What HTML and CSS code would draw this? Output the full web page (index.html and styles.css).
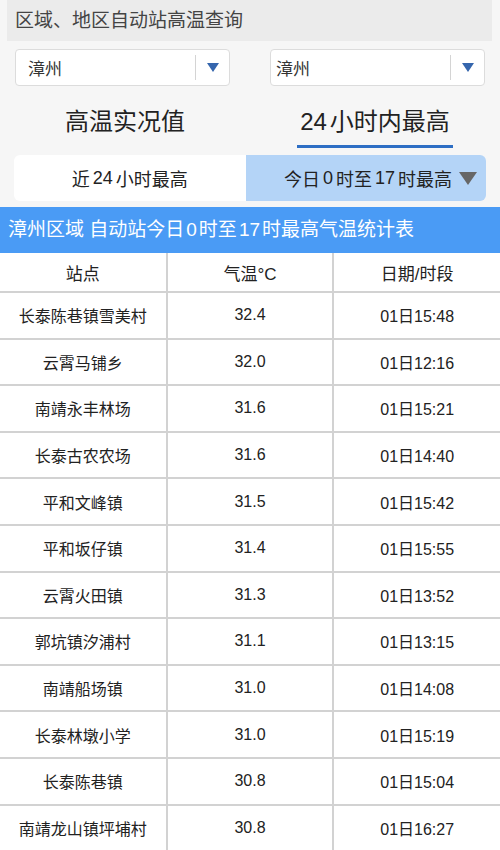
FILE: index.html
```html
<!DOCTYPE html>
<html lang="zh">
<head>
<meta charset="utf-8">
<link rel="stylesheet" href="styles.css">
</head>
<body>
<div class="page">
  <div class="header">区域、地区自动站高温查询</div>
  <div class="selects">
    <div class="select sel-left">
      <span class="sel-text">漳州</span>
      <span class="sel-arrow"><span class="tri-blue"></span></span>
    </div>
    <div class="select sel-right">
      <span class="sel-text">漳州</span>
      <span class="sel-arrow"><span class="tri-blue"></span></span>
    </div>
  </div>
  <div class="tabs">
    <div class="tab"><span class="tab-label">高温实况值</span></div>
    <div class="tab active"><span class="tab-label"><span class="num">24</span>小时内最高</span></div>
  </div>
  <div class="subtabs">
    <div class="subtab">近<span class="num">24</span>小时最高</div>
    <div class="subtab sub-active">今日<span class="num">0</span>时至<span class="num">17</span>时最高<span class="tri-gray"></span></div>
  </div>
  <div class="title">漳州区域 自动站今日<span class="num">0</span>时至<span class="num">17</span>时最高气温统计表</div>
  <table class="data">
    <thead>
      <tr><th>站点</th><th>气温°C</th><th>日期/时段</th></tr>
    </thead>
    <tbody>
      <tr><td>长泰陈巷镇雪美村</td><td>32.4</td><td>01日15:48</td></tr>
      <tr><td>云霄马铺乡</td><td>32.0</td><td>01日12:16</td></tr>
      <tr><td>南靖永丰林场</td><td>31.6</td><td>01日15:21</td></tr>
      <tr><td>长泰古农农场</td><td>31.6</td><td>01日14:40</td></tr>
      <tr><td>平和文峰镇</td><td>31.5</td><td>01日15:42</td></tr>
      <tr><td>平和坂仔镇</td><td>31.4</td><td>01日15:55</td></tr>
      <tr><td>云霄火田镇</td><td>31.3</td><td>01日13:52</td></tr>
      <tr><td>郭坑镇汐浦村</td><td>31.1</td><td>01日13:15</td></tr>
      <tr><td>南靖船场镇</td><td>31.0</td><td>01日14:08</td></tr>
      <tr><td>长泰林墩小学</td><td>31.0</td><td>01日15:19</td></tr>
      <tr><td>长泰陈巷镇</td><td>30.8</td><td>01日15:04</td></tr>
      <tr><td>南靖龙山镇坪埔村</td><td>30.8</td><td>01日16:27</td></tr>
    </tbody>
  </table>
</div>
</body>
</html>
```
FILE: styles.css
```css
html, body {
  margin: 0;
  padding: 0;
  background: #f6f6f6;
}
body {
  font-family: "Liberation Sans", "Noto Sans CJK SC", sans-serif;
  color: #222;
  width: 500px;
  height: 850px;
  overflow: hidden;
}
.num {
  margin: 0 2px;
}
.header {
  margin: 0 8px 0 7px;
  height: 41px;
  background: #ebebeb;
  font-size: 19px;
  line-height: 41px;
  padding-left: 8px;
  color: #444;
}
.selects {
  display: flex;
  justify-content: space-between;
  padding: 8px 15px 0 15px;
}
.select {
  width: 215px;
  height: 37px;
  box-sizing: border-box;
  background: #fff;
  border: 1px solid #dcdcdc;
  border-radius: 4px;
  display: flex;
  align-items: center;
}
.sel-text {
  flex: 1;
  font-size: 17px;
  color: #333;
}
.sel-left .sel-text { padding-left: 12px; }
.sel-right .sel-text { padding-left: 5px; }
.sel-arrow {
  width: 33px;
  height: 25px;
  border-left: 1px solid #d4d4d4;
  display: flex;
  align-items: center;
  justify-content: center;
}
.tri-blue {
  width: 0;
  height: 0;
  border-left: 6px solid transparent;
  border-right: 6px solid transparent;
  border-top: 9px solid #3566ad;
}
.tabs {
  display: flex;
  height: 69px;
  box-sizing: border-box;
  padding-top: 21px;
}
.tab {
  flex: 1;
  display: flex;
  justify-content: center;
  align-items: flex-start;
  font-size: 24px;
  color: #222;
}
.tab-label {
  display: block;
  line-height: 30px;
  padding: 0 3px 8px 3px;
  border-bottom: 3px solid transparent;
}
.tab.active .tab-label {
  border-bottom-color: #2d6ec4;
}
.tab-label .num {
  margin: 0 3px 0 0;
}
.subtabs {
  display: flex;
  margin: 0 14px;
  height: 46px;
  border-radius: 6px;
  overflow: hidden;
}
.subtab {
  flex: 1;
  display: flex;
  align-items: center;
  justify-content: center;
  font-size: 18px;
  background: #fff;
}
.subtab .num {
  margin: 0 3px;
}
.subtab.sub-active {
  background: #b4d4f7;
  justify-content: flex-end;
  padding-right: 9px;
}
.tri-gray {
  width: 0;
  height: 0;
  border-left: 9px solid transparent;
  border-right: 9px solid transparent;
  border-top: 13px solid #666;
  margin-left: 7px;
}
.title {
  margin-top: 6px;
  height: 46px;
  background: #4a9bf5;
  color: #fff;
  font-size: 19px;
  line-height: 46px;
  padding-left: 8px;
  white-space: nowrap;
}
.data {
  width: 500px;
  border-collapse: collapse;
  background: #fff;
  table-layout: fixed;
}
.data th, .data td {
  text-align: center;
  border: 2px solid #d2d2d2;
  padding: 0;
  color: #222;
}
.data tr > :first-child { border-left: none; }
.data tr > :last-child { border-right: none; }
.data thead th {
  border-top: none;
  height: 38px;
  font-size: 17px;
  font-weight: normal;
}
.data td {
  height: 44.6px;
  font-size: 16px;
}
```
